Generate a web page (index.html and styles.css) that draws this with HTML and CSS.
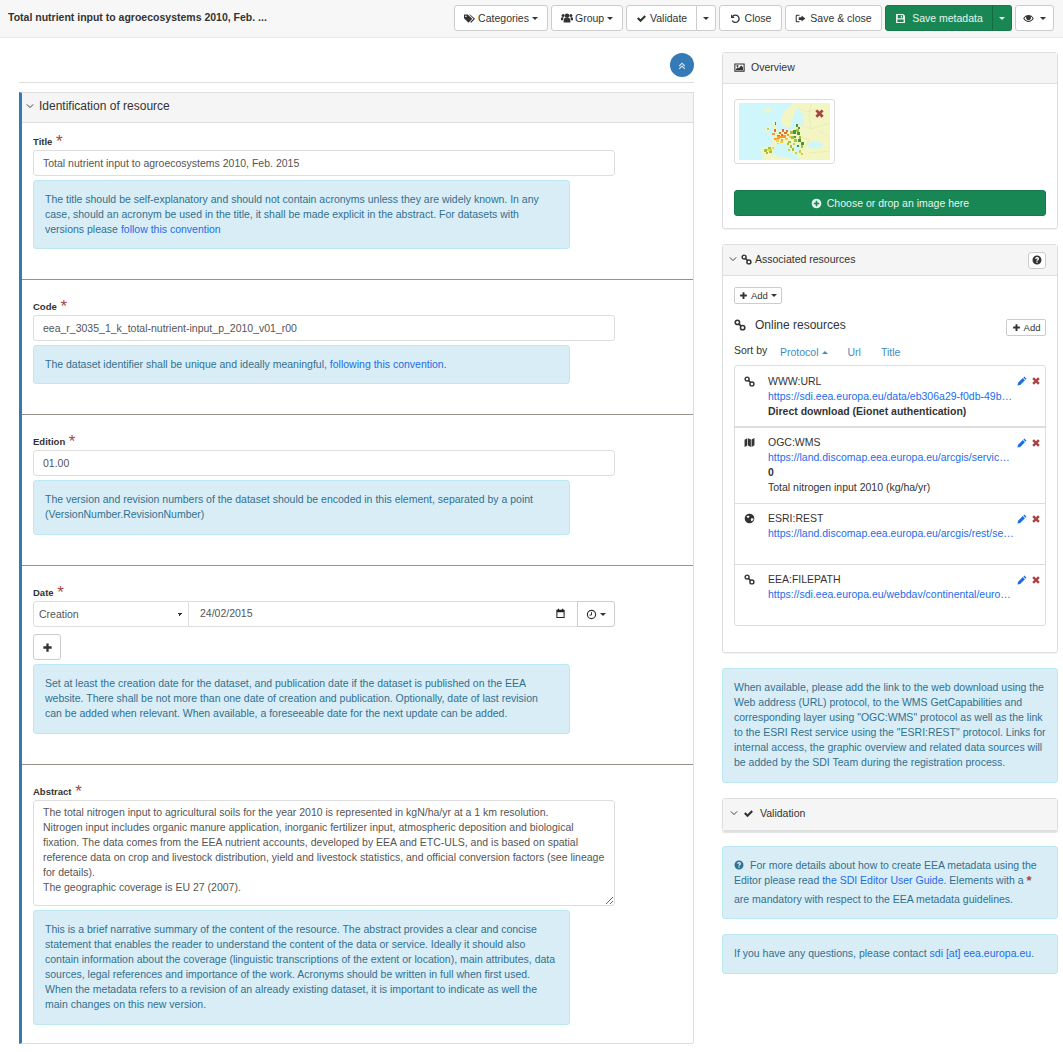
FILE: index.html
```html
<!DOCTYPE html>
<html lang="en">
<head>
    <meta charset="UTF-8">
    <meta name="viewport" content="width=device-width, initial-scale=1.0">
    <title>Edit metadata</title>
    <link rel="stylesheet" href="styles.css">
</head>
<body>

    <!-- Icon sprite -->
    <svg class="sprite" xmlns="http://www.w3.org/2000/svg">
        <symbol id="i-tags" viewBox="0 0 16 16"><path fill-rule="evenodd" d="M0 2h5.500L12 8.500 6.500 14 0 7.500zM2.800 3.500a1.200 1.200 0 1 0 0 2.400 1.200 1.200 0 0 0 0-2.400z"/><path d="M7.500 2h1.200L16 8.500 10.500 14l-1.500-.8 4.800-4.700z"/></symbol>
        <symbol id="i-users" viewBox="0 0 16 16"><circle cx="8" cy="5" r="3"/><circle cx="2.800" cy="4.500" r="2"/><circle cx="13.200" cy="4.500" r="2"/><path d="M3.500 14v-3.500C3.500 9 4.500 8 5.500 8h5c1 0 2 1 2 2.500V14z"/><path d="M0 10.500V8.500C0 7.500.8 7 1.500 7h1.800L2.500 11H0zM16 10.500V8.500c0-1-.8-1.500-1.500-1.500h-1.800l.8 4H16z"/></symbol>
        <symbol id="i-check" viewBox="0 0 16 16"><path d="M1.500 8.500l2.200-2.200 2.900 2.900 5.700-6 2.200 2.200-7.900 8z"/></symbol>
        <symbol id="i-undo" viewBox="0 0 16 16"><path d="M4 4.800A5.300 5.300 0 1 1 3.300 11" fill="none" stroke="currentColor" stroke-width="2"/><path d="M1.500 1.800v5.400h5.400z"/></symbol>
        <symbol id="i-signout" viewBox="0 0 16 16"><path d="M6.500 2.500H3A2 2 0 0 0 1 4.500v7a2 2 0 0 0 2 2h3.500V12H3.500a1 1 0 0 1-1-1V5a1 1 0 0 1 1-1h3z"/><path d="M9.500 3.500L15 8l-5.500 4.500V10H5.500V6h4z"/></symbol>
        <symbol id="i-save" viewBox="0 0 16 16"><path fill-rule="evenodd" d="M1.500 1.500h10.500l2.500 2.500v10.500h-13zM4 3v4.500h7.500V3zM8.500 3.800h1.500v3H8.500zM3.500 9.500V13h9V9.500z"/></symbol>
        <symbol id="i-eye" viewBox="0 0 16 16"><path fill-rule="evenodd" d="M.3 8C2.300 4.600 5 3 8 3s5.700 1.600 7.700 5c-2 3.400-4.700 5-7.700 5S2.300 11.400.3 8zM2 8c1.500 2.300 3.500 3.600 6 3.600s4.500-1.300 6-3.600c-.8-1.200-1.700-2.100-2.800-2.800a3.600 3.600 0 1 1-6.400 0C3.700 5.900 2.800 6.800 2 8z"/></symbol>
        <symbol id="i-double-up" viewBox="0 0 16 16"><path d="M3.500 8L8 3.500 12.500 8M3.500 12.500L8 8l4.500 4.500" fill="none" stroke="currentColor" stroke-width="1.700"/></symbol>
        <symbol id="i-image" viewBox="0 0 16 16"><path fill-rule="evenodd" d="M.5 2h15v12H.5zM2 3.500v9h12v-9zM3 11.500V10l2.500-2.500L7 9l3.500-3.800 2.500 2.500v3.800zM5 4.500a1.400 1.400 0 1 1 0 2.800 1.400 1.400 0 0 1 0-2.800z"/></symbol>
        <symbol id="i-times" viewBox="0 0 16 16"><path d="M2 4.800L4.800 2 8 5.200 11.200 2 14 4.800 10.800 8 14 11.200 11.200 14 8 10.800 4.800 14 2 11.200 5.200 8z"/></symbol>
        <symbol id="i-plus-circle" viewBox="0 0 16 16"><path fill-rule="evenodd" d="M8 1a7 7 0 1 0 0 14A7 7 0 0 0 8 1zM6.800 4h2.400v2.800H12v2.400H9.200V12H6.800V9.200H4V6.800h2.800z"/></symbol>
        <symbol id="i-angle-down" viewBox="0 0 16 16"><path d="M3 5.500L8 10.500 13 5.500" fill="none" stroke="currentColor" stroke-width="1.500"/></symbol>
        <symbol id="i-link" viewBox="0 0 16 16"><circle cx="4.500" cy="4.500" r="2.900" fill="none" stroke="currentColor" stroke-width="2.100"/><circle cx="11.500" cy="11.500" r="2.900" fill="none" stroke="currentColor" stroke-width="2.100"/><path d="M6.500 6.500l3 3" stroke="currentColor" stroke-width="2.400"/></symbol>
        <symbol id="i-question" viewBox="0 0 16 16"><path fill-rule="evenodd" d="M8 .8a7.200 7.200 0 1 0 0 14.400A7.200 7.200 0 0 0 8 .8zM6.900 10.300h2.200v2.200H6.900zM4.900 6C5.100 4.300 6.300 3.300 8.100 3.300c1.800 0 3.100 1.100 3.100 2.600 0 1.200-.7 1.800-1.400 2.300-.5.400-.7.600-.7 1.100H6.900c0-1 .4-1.600 1.100-2.100.6-.4 1-.7 1-1.200 0-.5-.4-.9-1-.9-.7 0-1.100.4-1.200 1.100z"/></symbol>
        <symbol id="i-plus" viewBox="0 0 16 16"><path d="M6.300 2h3.400v4.300H14v3.400H9.700V14H6.300V9.700H2V6.300h4.300z"/></symbol>
        <symbol id="i-map" viewBox="0 0 16 16"><path d="M.8 4L4.800 1.800v10.400L.8 14.400zM5.800 1.800l4.200 2v10.600l-4.200-2.200zM11 3.800l4.200-2.200v10.500L11 14.400z"/></symbol>
        <symbol id="i-globe" viewBox="0 0 16 16"><path fill-rule="evenodd" d="M8 1a7 7 0 1 0 0 14A7 7 0 0 0 8 1zM3.500 5L6 3.500 8 5 7 7 5 7zM10 8l3.500-.5.300 2-2.300 3L10 10.500z"/></symbol>
        <symbol id="i-pencil" viewBox="0 0 16 16"><path d="M11.800.8l3.400 3.400-1.600 1.600-3.400-3.400zM9.300 3.300l3.400 3.400-7.600 7.600-4.300.9.900-4.300z"/></symbol>
        <symbol id="i-clock" viewBox="0 0 16 16"><circle cx="8" cy="8" r="6" fill="none" stroke="currentColor" stroke-width="1.700"/><path d="M8 4.500V8.800H5" fill="none" stroke="currentColor" stroke-width="1.400"/></symbol>
        <symbol id="i-calendar" viewBox="0 0 16 16"><path fill-rule="evenodd" d="M4 1h2v1.500h4V1h2v1.500h2v12H2v-12h2zM3.500 6v7h9V6z"/></symbol>
    </svg>

    <!-- Top toolbar -->
    <header class="topbar">
        <strong class="doc-title">Total nutrient input to agroecosystems 2010, Feb. ...</strong>
        <div class="toolbar">
            <button class="btn btn-categories"><svg class="icon"><use href="#i-tags"/></svg>Categories<span class="caret"></span></button>
            <button class="btn btn-group-menu"><svg class="icon"><use href="#i-users"/></svg>Group<span class="caret"></span></button>
            <div class="btn-group">
                <button class="btn btn-validate"><svg class="icon"><use href="#i-check"/></svg>Validate</button>
                <button class="btn btn-split"><span class="caret"></span></button>
            </div>
            <button class="btn btn-close"><svg class="icon"><use href="#i-undo"/></svg>Close</button>
            <button class="btn btn-saveclose"><svg class="icon"><use href="#i-signout"/></svg>Save &amp; close</button>
            <div class="btn-group">
                <button class="btn btn-success btn-savemeta"><svg class="icon"><use href="#i-save"/></svg>Save metadata</button>
                <button class="btn btn-success btn-split"><span class="caret"></span></button>
            </div>
            <button class="btn btn-view"><svg class="icon"><use href="#i-eye"/></svg><span class="caret"></span></button>
        </div>
    </header>

    <div class="layout">
        <!-- Editor form -->
        <main class="editor">
            <div class="collapse-row">
                <button class="round-btn"><svg class="icon"><use href="#i-double-up"/></svg></button>
            </div>

            <section class="form-section">
                <h2 class="section-head"><svg class="icon icon-angle"><use href="#i-angle-down"/></svg>Identification of resource</h2>

                <div class="field field-first">
                    <label class="field-label">Title <span class="req">*</span></label>
                    <input class="form-control" type="text" value="Total nutrient input to agroecosystems 2010, Feb. 2015">
                    <div class="help">The title should be self-explanatory and should not contain acronyms unless they are widely known. In any case, should an acronym be used in the title, it shall be made explicit in the abstract. For datasets with versions please <a href="#">follow this convention</a></div>
                </div>

                <div class="field">
                    <label class="field-label">Code <span class="req">*</span></label>
                    <input class="form-control" type="text" value="eea_r_3035_1_k_total-nutrient-input_p_2010_v01_r00">
                    <div class="help">The dataset identifier shall be unique and ideally meaningful, <a href="#">following this convention</a>.</div>
                </div>

                <div class="field">
                    <label class="field-label">Edition <span class="req">*</span></label>
                    <input class="form-control" type="text" value="01.00">
                    <div class="help help-loose">The version and revision numbers of the dataset should be encoded in this element, separated by a point (VersionNumber.RevisionNumber)</div>
                </div>

                <div class="field">
                    <label class="field-label">Date <span class="req">*</span></label>
                    <div class="date-row">
                        <select class="form-control date-type"><option>Creation</option></select>
                        <div class="form-control date-value"><span>24/02/2015</span><svg class="icon"><use href="#i-calendar"/></svg></div>
                        <button class="btn btn-clock"><svg class="icon"><use href="#i-clock"/></svg><span class="caret"></span></button>
                    </div>
                    <button class="btn btn-add-date"><svg class="icon"><use href="#i-plus"/></svg></button>
                    <div class="help help-loose">Set at least the creation date for the dataset, and publication date if the dataset is published on the EEA website. There shall be not more than one date of creation and publication. Optionally, date of last revision can be added when relevant. When available, a foreseeable date for the next update can be added.</div>
                </div>

                <div class="field field-last">
                    <label class="field-label">Abstract <span class="req">*</span></label>
                    <textarea class="form-control abstract">The total nitrogen input to agricultural soils for the year 2010 is represented in kgN/ha/yr at a 1 km resolution.
Nitrogen input includes organic manure application, inorganic fertilizer input, atmospheric deposition and biological fixation. The data comes from the EEA nutrient accounts, developed by EEA and ETC-ULS, and is based on spatial reference data on crop and livestock distribution, yield and livestock statistics, and official conversion factors (see lineage for details).
The geographic coverage is EU 27 (2007).</textarea>
                    <div class="help help-loose">This is a brief narrative summary of the content of the resource. The abstract provides a clear and concise statement that enables the reader to understand the content of the data or service. Ideally it should also contain information about the coverage (linguistic transcriptions of the extent or location), main attributes, data sources, legal references and importance of the work. Acronyms should be written in full when first used. When the metadata refers to a revision of an already existing dataset, it is important to indicate as well the main changes on this new version.</div>
                </div>
            </section>
        </main>

        <!-- Side panels -->
        <aside class="sidebar">
            <section class="panel panel-overview">
                <h3 class="panel-head"><svg class="icon"><use href="#i-image"/></svg>Overview</h3>
                <div class="panel-body">
                    <div class="thumb">
                        <svg class="thumb-map" viewBox="0 0 91 57" xmlns="http://www.w3.org/2000/svg">
                            <rect width="91" height="57" fill="#cff7fb"/>
                            <g fill="#f3f6c2">
                                <path d="M46 8L54 1 60 0 60 5 56 8 54 14 52 22 48 25 44 22 42 15z"/>
                                <path d="M60 0H91V57H60L58 50 62 47 60 42 56 40 54 44 58 50 54 52 50 44 44 40 38 41 35 44 34 50 30 53 22 52 22 45 28 44 33 42 34 34 39 30 42 27 50 28 54 26 60 22 66 21 64 17 62 14 68 12 62 10 60 5z"/>
                                <path d="M22 57L26 53 36 52 40 54 48 54 54 57z"/>
                                <path d="M33 21L36 18 37 24 39 30 33 31 35 26z"/>
                                <path d="M27 24L31 23 31 27 27 29z"/>
                                <path d="M25 7L30 5 33 7 29 10 25 9z"/>
                            </g>
                            <ellipse cx="76" cy="42" rx="8" ry="3.500" fill="#cff7fb"/>
                            <path d="M60 5L66 9 78 6M62 22L72 26 91 20M60 34L70 36 66 46M72 0L70 12 72 26M80 28L91 34M70 50L91 48" fill="none" stroke="#e0e3b2" stroke-width=".5"/>
                            <!-- Nitrogen input values by colour class -->
                            <g class="map-values">
                                <path fill="#ec6a2a" d="M35 26h2v3h-2zM43 26h2v3h-2zM45 29h3v2h-3zM42 31h2v2h-2zM38 32h3v1h-3zM47 27h2v2h-2zM40 29h2v2h-2z"/>
                                <path fill="#f29a33" d="M33 30h3v2h-3zM38 33h3v3h-3zM41 33h3v2h-3zM44 32h3v3h-3zM35 35h3v2h-3zM42 36h2v2h-2zM48 31h2v2h-2z"/>
                                <path fill="#ecd33f" d="M37 36h3v3h-3zM41 38h3v2h-3zM46 35h3v2h-3zM50 33h2v2h-2zM28 46h3v2h-3zM33 44h2v2h-2zM38 40h2v1h-2z"/>
                                <path fill="#4f9432" d="M54 27h3v4h-3zM58 29h3v3h-3zM55 33h2v2h-2zM59 36h3v3h-3zM62 39h3v3h-3zM58 42h2v2h-2zM57 21h2v3h-2zM59 24h2v2h-2zM36 19h1v3h-1z"/>
                                <path fill="#9fc241" d="M51 28h3v3h-3zM57 26h3v3h-3zM52 33h3v3h-3zM55 36h3v3h-3zM60 33h2v3h-2zM62 42h2v3h-2zM25 46h3v3h-3zM29 44h3v2h-3zM30 48h3v2h-3zM27 49h2v2h-2zM49 38h3v2h-3zM51 42h2v3h-2zM53 45h2v3h-2zM48 40h2v2h-2z"/>
                                <path fill="#c9cf4a" d="M28 25h2v2h-2zM31 46h2v2h-2zM54 40h2v2h-2zM60 47h2v3h-2zM62 50h2v2h-2zM56 49h2v2h-2zM49 46h2v2h-2z"/>
                            </g>
                        </svg>
                        <svg class="icon thumb-remove"><use href="#i-times"/></svg>
                    </div>
                    <button class="btn btn-success btn-upload"><svg class="icon"><use href="#i-plus-circle"/></svg>Choose or drop an image here</button>
                </div>
            </section>

            <section class="panel panel-resources">
                <h3 class="panel-head">
                    <svg class="icon icon-angle"><use href="#i-angle-down"/></svg><svg class="icon"><use href="#i-link"/></svg>Associated resources
                    <button class="btn btn-help"><svg class="icon"><use href="#i-question"/></svg></button>
                </h3>
                <div class="panel-body">
                    <button class="btn btn-xs"><svg class="icon"><use href="#i-plus"/></svg>Add<span class="caret"></span></button>
                    <div class="resources-head">
                        <svg class="icon"><use href="#i-link"/></svg>
                        <span class="resources-title">Online resources</span>
                        <button class="btn btn-xs btn-add-online"><svg class="icon"><use href="#i-plus"/></svg>Add</button>
                    </div>
                    <div class="sort-row">
                        <span class="sort-label">Sort by</span>
                        <a href="#" class="sort-link">Protocol<span class="caret caret-up"></span></a>
                        <a href="#" class="sort-link">Url</a>
                        <a href="#" class="sort-link">Title</a>
                    </div>
                    <ul class="resource-list">
                        <li class="resource">
                            <svg class="icon res-icon"><use href="#i-link"/></svg>
                            <div class="res-text">
                                <div>WWW:URL</div>
                                <a href="#">https://sdi.eea.europa.eu/data/eb306a29-f0db-49b…</a>
                                <strong>Direct download (Eionet authentication)</strong>
                            </div>
                            <div class="res-actions"><svg class="icon icon-edit"><use href="#i-pencil"/></svg><svg class="icon icon-del"><use href="#i-times"/></svg></div>
                        </li>
                        <li class="resource">
                            <svg class="icon res-icon"><use href="#i-map"/></svg>
                            <div class="res-text">
                                <div>OGC:WMS</div>
                                <a href="#">https://land.discomap.eea.europa.eu/arcgis/servic…</a>
                                <strong>0</strong>
                                <div>Total nitrogen input 2010 (kg/ha/yr)</div>
                            </div>
                            <div class="res-actions"><svg class="icon icon-edit"><use href="#i-pencil"/></svg><svg class="icon icon-del"><use href="#i-times"/></svg></div>
                        </li>
                        <li class="resource">
                            <svg class="icon res-icon"><use href="#i-globe"/></svg>
                            <div class="res-text">
                                <div>ESRI:REST</div>
                                <a href="#">https://land.discomap.eea.europa.eu/arcgis/rest/se…</a>
                            </div>
                            <div class="res-actions"><svg class="icon icon-edit"><use href="#i-pencil"/></svg><svg class="icon icon-del"><use href="#i-times"/></svg></div>
                        </li>
                        <li class="resource">
                            <svg class="icon res-icon"><use href="#i-link"/></svg>
                            <div class="res-text">
                                <div>EEA:FILEPATH</div>
                                <a href="#">https://sdi.eea.europa.eu/webdav/continental/euro…</a>
                            </div>
                            <div class="res-actions"><svg class="icon icon-edit"><use href="#i-pencil"/></svg><svg class="icon icon-del"><use href="#i-times"/></svg></div>
                        </li>
                    </ul>
                </div>
            </section>

            <div class="help help-side help-links">When available, please add the link to the web download using the Web address (URL) protocol, to the WMS GetCapabilities and corresponding layer using "OGC:WMS" protocol as well as the link to the ESRI Rest service using the "ESRI:REST" protocol. Links for internal access, the graphic overview and related data sources will be added by the SDI Team during the registration process.</div>

            <section class="panel panel-validation">
                <h3 class="panel-head"><svg class="icon icon-angle"><use href="#i-angle-down"/></svg><svg class="icon"><use href="#i-check"/></svg>Validation</h3>
            </section>

            <div class="help help-side help-guide"><svg class="icon"><use href="#i-question"/></svg>For more details about how to create EEA metadata using the Editor please read <a href="#">the SDI Editor User Guide</a>. Elements with a <span class="req-inline">*</span> are mandatory with respect to the EEA metadata guidelines.</div>

            <div class="help help-side help-contact">If you have any questions, please contact <a href="#">sdi [at] eea.europa.eu</a>.</div>
        </aside>
    </div>

</body>
</html>
```

FILE: styles.css
```css
* {
    box-sizing: border-box;
}

body {
    margin: 0;
    font-family: "Liberation Sans", Arial, sans-serif;
    font-size: 10.5px;
    line-height: 15px;
    color: #333;
    background-color: #fff;
}

a {
    color: #1d6ce6;
    text-decoration: none;
}

.sprite {
    display: none;
}

.icon {
    display: inline-block;
    width: 11px;
    height: 11px;
    fill: currentColor;
    vertical-align: -2px;
    flex: none;
}

/* Top toolbar */
.topbar {
    height: 38px;
    padding: 5px 9px 0 8px;
    display: flex;
    justify-content: space-between;
    background-color: #f7f7f7;
    border-bottom: 1px solid #e7e7e7;
}

.doc-title {
    line-height: 25px;
    color: #333;
}

.toolbar {
    display: flex;
    gap: 3px;
}

.btn {
    height: 26px;
    padding: 0 9px;
    font: inherit;
    color: #333;
    background-color: #fff;
    border: 1px solid #ccc;
    border-radius: 3px;
    white-space: nowrap;
}

.btn .icon {
    margin-right: 3px;
}

.btn-success {
    color: #e8f5ee;
    background-color: #198754;
    border-color: #17794b;
}

.caret {
    display: inline-block;
    width: 0;
    height: 0;
    margin-left: 3px;
    vertical-align: 2px;
    border-top: 3px solid currentColor;
    border-left: 3px solid transparent;
    border-right: 3px solid transparent;
}

.caret-up {
    border-top: none;
    border-bottom: 3px solid currentColor;
}

.btn-group {
    display: flex;
}

.btn-group .btn:first-child {
    border-radius: 3px 0 0 3px;
}

.btn-split {
    width: 20px;
    padding: 0;
    margin-left: -1px;
    border-radius: 0 3px 3px 0;
}

.btn-split .caret {
    margin: 0;
}

.btn-success.btn-split {
    border-left-color: #116a40;
}

.btn-categories { width: 94px; }
.btn-group-menu { width: 72px; }
.btn-validate { width: 71px; }
.btn-close { width: 63px; }
.btn-saveclose { width: 97px; }
.btn-savemeta { width: 108px; }
.btn-view { width: 39px; padding: 0; }

.btn-group-menu .icon {
    width: 12px;
    height: 12px;
    margin-right: 2px;
}

.btn-close .icon,
.btn-saveclose .icon {
    margin-right: 4px;
}

.btn-savemeta .icon {
    margin-right: 6px;
}

/* Main layout */
.layout {
    display: flex;
    padding: 0 5px 0 19px;
    gap: 28px;
}

.editor {
    width: 675px;
}

.sidebar {
    width: 336px;
    padding-top: 14px;
}

/* Editor */
.collapse-row {
    height: 45px;
    margin-bottom: 9px;
    padding-top: 15px;
    display: flex;
    justify-content: flex-end;
    border-bottom: 1px solid #ddd;
}

.round-btn {
    width: 24px;
    height: 24px;
    padding: 0;
    color: #d9e6f2;
    background-color: #337ab7;
    border: none;
    border-radius: 50%;
}

.round-btn .icon {
    width: 10px;
    height: 10px;
    vertical-align: -1px;
}

.form-section {
    border: 1px solid #ddd;
    border-left: 3px solid #337ab7;
    border-radius: 0 0 3px 0;
}

.section-head {
    height: 30px;
    margin: 0;
    padding-left: 3px;
    font-size: 12px;
    font-weight: normal;
    line-height: 27px;
    background-color: #f5f5f5;
    border-bottom: 1px solid #ddd;
}

.icon-angle {
    width: 10px;
    height: 10px;
    margin-right: 4px;
    vertical-align: -1px;
}

.field {
    padding: 16px 11px 30px;
    border-top: 1px solid #9a918b;
}

.field-first {
    padding-top: 8px;
    border-top: none;
}

.field-last {
    padding-bottom: 18px;
}

.field-label {
    display: block;
    height: 19px;
    font-size: 9.5px;
    font-weight: bold;
    line-height: 22px;
}

.req {
    margin-left: 1px;
    font-size: 17px;
    font-weight: normal;
    line-height: 15px;
    vertical-align: -2px;
    color: #a94442;
}

.form-control {
    display: block;
    width: 582px;
    height: 26px;
    padding: 0 9px;
    font: inherit;
    color: #555;
    background-color: #fff;
    border: 1px solid #ddd;
    border-radius: 3px;
    outline: none;
}

.help {
    width: 537px;
    margin-top: 4px;
    padding: 11px 13px 11px 11px;
    color: #31708f;
    background-color: #d9edf7;
    border: 1px solid #bce8f1;
    border-radius: 3px;
}

.help-loose {
    padding-bottom: 12px;
}

.date-row {
    display: flex;
    width: 582px;
}

.date-type {
    width: 156px;
    padding: 1px 0 0 5px;
    appearance: none;
    border-radius: 3px 0 0 3px;
    background-image: linear-gradient(45deg, transparent 50%, #333 50%), linear-gradient(135deg, #333 50%, transparent 50%);
    background-position: right 8px center, right 5px center;
    background-size: 3px 3px;
    background-repeat: no-repeat;
}

.date-value {
    flex: 1;
    display: flex;
    align-items: center;
    justify-content: space-between;
    padding: 0 11px 1px 11px;
    border-left: none;
    border-radius: 0;
}

.date-value .icon {
    color: #222;
}

.btn-clock {
    width: 38px;
    padding: 0;
    margin-left: -1px;
    border-radius: 0 3px 3px 0;
}

.btn-clock .icon {
    margin-right: 0;
}

.btn-add-date {
    display: block;
    width: 28px;
    margin-top: 7px;
    padding: 0;
}

.btn-add-date .icon {
    margin: 0;
}

.abstract {
    height: 106px;
    padding: 4px 9px;
    line-height: 15px;
}

/* Side panels */
.panel {
    margin-bottom: 15px;
    border: 1px solid #ddd;
    border-radius: 3px;
    box-shadow: 0 1px 1px rgba(0, 0, 0, 0.05);
}

.panel-head {
    height: 31px;
    margin: 0;
    padding-left: 11px;
    font-size: 10.5px;
    font-weight: normal;
    line-height: 29px;
    background-color: #f5f5f5;
    border-bottom: 1px solid #ddd;
}

.panel-head > .icon:not(.icon-angle) {
    margin-right: 6px;
}

.panel-body {
    padding: 15px 11px;
}

.panel-overview {
    height: 177px;
}

.thumb {
    position: relative;
    width: 101px;
    height: 65px;
    padding: 3px 4px;
    border: 1px solid #ddd;
    border-radius: 3px;
}

.thumb-map {
    display: block;
    width: 91px;
    height: 57px;
}

.map-values {
    filter: blur(0.5px);
}

.thumb-remove {
    position: absolute;
    top: 8px;
    right: 9px;
    width: 11px;
    height: 11px;
    color: #a94442;
}

.btn-upload {
    display: block;
    width: 312px;
    margin-top: 26px;
    color: #e8f5ee;
}

.btn-upload .icon {
    margin-right: 5px;
}

.panel-resources {
    height: 409px;
}

.panel-resources .panel-head {
    display: flex;
    align-items: center;
    padding-left: 5px;
    padding-bottom: 2px;
}

.panel-resources .panel-head .icon-angle {
    margin-right: 3px;
}

.panel-resources .panel-head > .icon:not(.icon-angle) {
    width: 11px;
    height: 11px;
    margin-right: 3px;
}

.btn-help {
    display: flex;
    align-items: center;
    justify-content: center;
    width: 18px;
    height: 17px;
    margin: 2px 11px 0 auto;
    padding: 0;
}

.btn-help .icon {
    width: 10px;
    height: 10px;
    margin: 0;
}

.panel-resources .panel-body {
    padding-top: 11px;
}

.btn-xs {
    height: 17px;
    padding: 0 4px;
    font-size: 9.5px;
    line-height: 14px;
    border-radius: 2px;
}

.btn-xs .icon {
    width: 9px;
    height: 9px;
    margin-right: 3px;
    vertical-align: -1px;
}

.resources-head {
    display: flex;
    align-items: center;
    height: 17px;
    margin-top: 15px;
}

.resources-head > .icon {
    width: 12px;
    height: 12px;
    margin-bottom: 5px;
}

.resources-title {
    margin-left: 9px;
    margin-bottom: 5px;
    font-size: 12px;
}

.btn-add-online {
    margin-left: auto;
    width: 40px;
    padding: 0;
}

.sort-row {
    display: flex;
    height: 22px;
    margin-top: 7px;
    line-height: 15px;
}

.sort-label {
    width: 46px;
}

.sort-link {
    margin-right: 20px;
    margin-top: 2px;
    color: #428bca;
}

.sort-link .caret {
    margin-left: 3px;
}

.resource-list {
    height: 261px;
    margin: 0;
    padding: 0;
    list-style: none;
    border: 1px solid #ddd;
    border-radius: 3px;
}

.resource {
    position: relative;
    display: flex;
    height: 61px;
    padding: 7px 10px 0 9px;
    border-bottom: 1px solid #ddd;
}

.resource:first-child {
    height: 62px;
    padding-top: 8px;
    border-bottom-width: 2px;
}

.resource:nth-child(2) {
    height: 76px;
}

.resource:last-child {
    border-bottom: none;
}

.res-icon {
    width: 11px;
    height: 11px;
    margin: 2px 13px 0 0;
}

.res-text {
    flex: 1;
    white-space: nowrap;
}

.res-text a,
.res-text strong {
    display: block;
}

.res-actions {
    position: absolute;
    top: 10px;
    right: 4px;
    display: flex;
    gap: 4px;
}

.res-actions .icon {
    width: 10px;
    height: 10px;
}

.icon-edit {
    color: #1d6ce6;
}

.icon-del {
    color: #a94442;
}

.help-side {
    width: 336px;
    margin: 0 0 15px;
    padding-right: 11px;
}

.panel-validation {
    height: 33px;
    box-shadow: 0 2px 1px rgba(0, 0, 0, 0.12);
}

.panel-validation .panel-head {
    padding-left: 6px;
    border-bottom: none;
}

.panel-validation .icon-angle {
    margin-right: 4px;
}

.help-links {
    height: 115px;
}

.help-guide {
    height: 73px;
}

.help-guide .icon {
    width: 10px;
    height: 10px;
    margin-right: 6px;
    vertical-align: -1px;
}

.req-inline {
    display: inline-block;
    height: 19px;
    font-size: 13px;
    font-weight: bold;
    line-height: 15px;
    vertical-align: top;
    color: #a94442;
}

.help-contact {
    height: 40px;
}
```
